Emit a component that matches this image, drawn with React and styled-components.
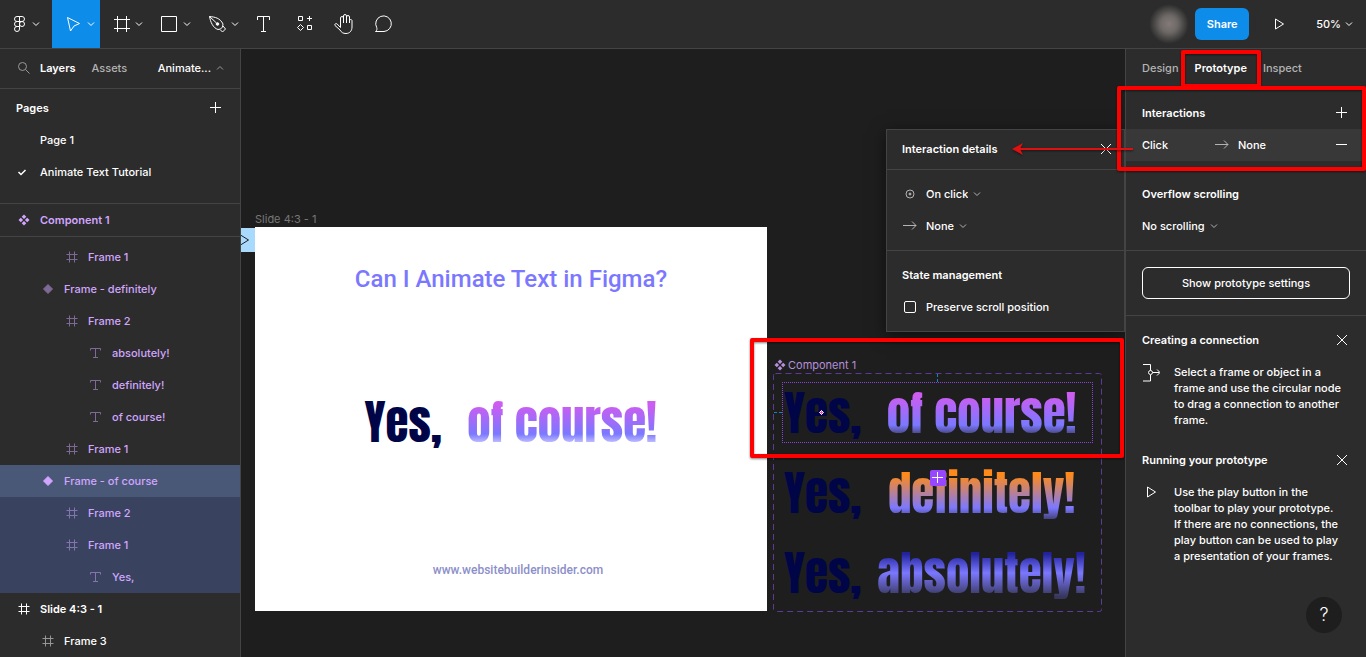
import React from "react";
import styled, { createGlobalStyle, css } from "styled-components";

const GlobalStyle = createGlobalStyle`
  * {
    box-sizing: border-box;
  }

  body {
    margin: 0;
    background: #1e1e1e;
    color: #fff;
    font-family: Inter, "Liberation Sans", sans-serif;
    font-size: 11px;
    line-height: 16px;
    font-weight: 500;
  }

  button,
  select,
  input {
    margin: 0;
    padding: 0;
    border: 0;
    background: none;
    color: inherit;
    font: inherit;
  }

  h2,
  p,
  ul {
    margin: 0;
    padding: 0;
    font: inherit;
    list-style: none;
  }
`;

/* ---------- icons ---------- */

const Svg = styled.svg`
  display: block;
  flex: none;
  fill: none;
  stroke: currentColor;
  stroke-width: 1;
`;

const Icon = ({ size = 16, width, children, ...rest }) => (
  <Svg
    width={width || size}
    height={size}
    viewBox={`0 0 ${width || size} ${size}`}
    aria-hidden="true"
    {...rest}
  >
    {children}
  </Svg>
);

const ChevronIcon = ({ up }) => (
  <Icon size={10}>
    <path d={up ? "M2 6.5L5 3.5L8 6.5" : "M2 3.5L5 6.5L8 3.5"} />
  </Icon>
);

const FigmaIcon = () => (
  <Icon size={24}>
    <path d="M12.5 4.5H10a2.5 2.5 0 0 0 0 5h2.5zM12.5 4.5H15a2.5 2.5 0 0 1 0 5h-2.5zM12.5 9.5H10a2.5 2.5 0 0 0 0 5h2.5zM12.5 14.5H10a2.5 2.5 0 1 0 2.5 2.5zM15 9.5a2.5 2.5 0 1 1 0 5a2.5 2.5 0 0 1 0-5z" />
  </Icon>
);

const MoveIcon = () => (
  <Icon size={24}>
    <path d="M5.5 5.5L17.5 11.5L12 14L8.500 19z" strokeLinejoin="round" />
  </Icon>
);

const FrameIcon = () => (
  <Icon size={24}>
    <path d="M7.5 4v16M16.5 4v16M4 7.5h16M4 16.5h16" />
  </Icon>
);

const RectIcon = () => (
  <Icon size={24}>
    <path d="M3.5 4.5h15v15h-15z" />
  </Icon>
);

const PenIcon = () => (
  <Icon size={24}>
    <path
      d="M3.500 4.500C9 5 14 6 17 12L16.500 15L14.500 17L12 17.500C7 16 4.500 10 3.500 4.500L10.500 11"
      strokeLinejoin="round"
    />
    <path d="M17 14l2.500 3l-3 3l-2.500-2.500" strokeLinejoin="round" />
    <circle cx="11.500" cy="12" r="1.300" fill="currentColor" />
  </Icon>
);

const TextToolIcon = () => (
  <Icon size={24}>
    <path d="M5.5 8V4.5h12V8M11.5 4.5v15M9 19.5h5" />
  </Icon>
);

const ResourcesIcon = () => (
  <Icon size={24}>
    <path d="M6.5 4.500h4v4h-4zM15.5 13.500h4v4h-4zM17.5 4v5M15 6.500h5M8.5 12.500l3 3l-3 3l-3-3z" />
  </Icon>
);

const HandIcon = () => (
  <Icon size={24}>
    <path
      d="M11.500 11V6a1.500 1.500 0 0 0-3 0V15.500L5.200 12C4 11 2.200 12 3 13.500L8 18c1.500 2.500 3 3.500 6 3.500c3.500 0 6-2.500 6-6.500V8.500a1.300 1.300 0 0 0-2.500 0V11M11.500 6V4a1.500 1.500 0 0 1 3 0V11M14.500 5a1.500 1.500 0 0 1 3 0V9"
      strokeLinejoin="round"
    />
  </Icon>
);

const CommentIcon = () => (
  <Icon size={24}>
    <path
      d="M3.500 19.500C5 18.400 5.200 17 4.700 15.500A7.800 7.800 0 1 1 12 19.500z"
      strokeLinejoin="round"
    />
  </Icon>
);

const PlayIcon = () => (
  <Icon size={16}>
    <path d="M4.500 3L12.500 8L4.500 13z" strokeLinejoin="round" />
  </Icon>
);

const SearchIcon = () => (
  <Icon size={16}>
    <circle cx="6.500" cy="6.500" r="4" />
    <path d="M9.500 9.500L13.500 13.500" />
  </Icon>
);

const PlusIcon = () => (
  <Icon size={16}>
    <path d="M7.500 2v11M2 7.500h11" />
  </Icon>
);

const MinusIcon = () => (
  <Icon size={16}>
    <path d="M2 7.500h11" />
  </Icon>
);

const CloseIcon = () => (
  <Icon size={16}>
    <path d="M3 3L13 13M13 3L3 13" />
  </Icon>
);

const CheckIcon = () => (
  <Icon size={12}>
    <path d="M2.500 6L5 8.500L9.500 4" strokeWidth="1.500" />
  </Icon>
);

const ArrowIcon = () => (
  <Icon size={16}>
    <path d="M1 7.500h13M10 3.500L14 7.500L10 11.500" />
  </Icon>
);

const ClickIcon = () => (
  <Icon size={16}>
    <circle cx="8" cy="8" r="4" />
    <circle cx="8" cy="8" r="1" fill="currentColor" />
  </Icon>
);

const ConnectionIcon = () => (
  <Icon size={18}>
    <path d="M1 .500h7.500v6M8.500 11v6H1M10.500 8.500h7M15 5.500l3 3l-3 3" />
    <circle cx="8.500" cy="8.500" r="2" />
  </Icon>
);

const layerIcons = {
  frame: <path d="M5.500 2.500v11M10.500 2.500v11M2.500 5.500h11M2.500 10.500h11" />,
  text: <path d="M2.500 5.500v-2h10v2M7.500 3.500v9M5 12.500h5" />,
  variant: <path d="M8 3.500L12.500 8L8 12.500L3.500 8z" fill="currentColor" />,
  component: (
    <path
      d="M8 2.500L10.300 4.800L8 7.100L5.700 4.800zM8 8.900L10.300 11.200L8 13.500L5.700 11.200zM4.800 5.700L7.100 8L4.800 10.300L2.500 8zM11.200 5.700L13.500 8L11.200 10.300L8.900 8z"
      fill="currentColor"
      stroke="none"
    />
  ),
};

/* ---------- toolbar ---------- */

const Page = styled.div`
  position: relative;
  display: flex;
  flex-direction: column;
  height: 100vh;
  overflow: hidden;
`;

const Toolbar = styled.header`
  display: flex;
  justify-content: space-between;
  flex: none;
  height: 49px;
  background: #2c2c2c;
  border-bottom: 1px solid #444;
`;

const ToolGroup = styled.div`
  display: flex;
  align-items: center;
`;

const Tool = styled.button`
  display: flex;
  align-items: center;
  justify-content: center;
  width: ${({ $menu }) => ($menu ? 48 : 40)}px;
  height: 48px;
  padding-left: ${({ $menu }) => ($menu ? 6 : 0)}px;
  background: ${({ $active }) => ($active ? "#0d8ce9" : "transparent")};
`;

const MainMenu = styled(Tool)`
  width: 52px;
  padding-right: 4px;
`;

const Avatar = styled.div`
  width: 40px;
  height: 40px;
  margin-right: 6px;
  border-radius: 50%;
  background: radial-gradient(circle, #857a78 0%, #6d6967 30%, #2c2c2c 70%);
`;

const ShareButton = styled.button`
  width: 54px;
  height: 32px;
  border-radius: 6px;
  background: #0d8ce9;
  font-weight: 600;
`;

const PresentButton = styled(Tool)`
  width: 60px;
`;

const Zoom = styled.div`
  display: flex;
  align-items: center;
  gap: 3px;
  padding: 0 12px 0 7px;
`;

const Select = styled.select`
  appearance: none;
  field-sizing: content;
  height: 16px;
  outline: none;
`;

/* ---------- panels ---------- */

const Workspace = styled.main`
  display: flex;
  flex: 1;
  min-height: 0;
`;

const Panel = styled.aside`
  flex: none;
  width: 241px;
  overflow: hidden;
  background: #2c2c2c;
  border: 0 solid #444;
  border-width: ${({ $side }) => ($side === "left" ? "0 1px 0 0" : "0 0 0 1px")};
`;

const Tabs = styled.div`
  display: flex;
  align-items: center;
  gap: 16px;
  height: 40px;
  padding: 0 15px 2px 16px;
  border-bottom: 1px solid #444;
`;

const Tab = styled.button`
  color: ${({ $active }) => ($active ? "#fff" : "#b3b3b3")};
  font-weight: ${({ $active }) => ($active ? 600 : 500)};
`;

const PageSwitch = styled.button`
  display: flex;
  align-items: center;
  gap: 4px;
  margin-left: auto;

  svg {
    color: #999;
  }
`;

const SearchButton = styled.button`
  margin-right: -8px;
  color: #999;
`;

const Section = styled.section`
  padding: 8px 0;
  border-bottom: ${({ $last }) => ($last ? "0" : "1px solid #444")};
`;

const PagesSection = styled(Section)`
  padding: 3px 0 15px;
`;

const Row = styled.div`
  display: flex;
  align-items: center;
  gap: 8px;
  height: 32px;
  padding: 0 16px;
  background: ${({ $filled }) => ($filled ? "#383838" : "transparent")};

  svg {
    color: ${({ $dim }) => ($dim ? "#b3b3b3" : "inherit")};
  }

  button svg {
    color: #fff;
  }
`;

const Heading = styled.h2`
  flex: 1;
  font-weight: 600;
`;

const PageItem = styled.li`
  display: flex;
  align-items: center;
  gap: 12px;
  height: 32px;
  padding-left: ${({ $current }) => ($current ? 16 : 40)}px;
`;

const layerColors = {
  selected: "#4a5878",
  child: "#394360",
};

const Layer = styled.li`
  display: flex;
  align-items: center;
  gap: 8px;
  height: 32px;
  padding-left: ${({ $depth }) => 16 + $depth * 24}px;
  color: ${({ $plain }) => ($plain ? "#fff" : "#d2a6ff")};
  background: ${({ $state }) => layerColors[$state] || "transparent"};
  font-weight: ${({ $depth }) => ($depth === 0 ? 600 : 500)};

  svg {
    opacity: ${({ $depth, $state }) =>
      $depth === 0 || $state === "selected" ? 1 : 0.5};
  }
`;

const RootLayer = styled.ul`
  border: solid #444;
  border-width: 0 0 1px;
`;

const LayerTree = styled.ul`
  padding-top: 4px;
`;

const ClickName = styled.span`
  width: 64px;
`;

const Target = styled.span`
  flex: 1;
`;

const SettingsButton = styled.button`
  display: block;
  width: calc(100% - 32px);
  height: 32px;
  margin: 8px 16px;
  border: 1px solid #fff;
  border-radius: 6px;
`;

const Tip = styled.div`
  display: flex;
  gap: 14px;
  padding: 8px 24px 16px 16px;
`;

const TipIcon = styled.span`
  display: flex;
  flex: none;
  justify-content: center;
  width: 18px;
`;

const HelpButton = styled.button`
  position: absolute;
  right: 24px;
  bottom: 24px;
  width: 36px;
  height: 36px;
  border-radius: 50%;
  background: #1e1e1e;
  font-size: 18px;
  font-weight: 300;
`;

/* ---------- canvas ---------- */

const Canvas = styled.section`
  position: relative;
  flex: 1;
  min-width: 0;
  overflow: hidden;
  background: #1e1e1e;
`;

const CanvasLabel = styled.span`
  position: absolute;
  left: ${({ $x }) => $x}px;
  top: ${({ $y }) => $y}px;
  display: flex;
  align-items: center;
  color: ${({ $component }) => ($component ? "#b58fdc" : "#777")};
  font-weight: 400;
`;

const StartPoint = styled.div`
  position: absolute;
  left: 0;
  top: 179px;
  width: 14px;
  height: 24px;
  overflow: hidden;
  background: #a9dafb;
  color: #1e1e1e;

  svg {
    margin: 4px 0 0 -5px;
  }
`;

const Slide = styled.article`
  position: absolute;
  left: 14px;
  top: 178px;
  display: flex;
  flex-direction: column;
  align-items: center;
  width: 512px;
  height: 384px;
  padding: 36px 0 33px;
  background: #fff;
  color: #7b78ff;
  font-family: Roboto, sans-serif;
`;

const SlideTitle = styled.h2`
  font-size: 24px;
  line-height: 32px;
  font-weight: 500;
`;

const SlideLink = styled.a`
  margin: auto 0 0 14px;
  color: #8c8fc9;
  font-size: 12px;
  text-decoration: none;
`;

const SlidePhrase = styled.div`
  width: 311px;
  margin: 96px 0 0 14px;
`;

const Phrase = styled.p`
  display: grid;
  grid-template-columns: 86px 1fr;
  align-items: center;
  height: 61px;
  padding-left: 2px;
  color: #000547;
  font-family: Impact, Anton, Roboto, sans-serif;
  font-size: 47px;
  line-height: 60px;
  font-weight: 400;
  white-space: nowrap;
`;

const gradients = {
  course: "#cf5cf0 20%, #7b78ff 70%, #7b78ff44 90%",
  definitely: "#ff8a1a 20%, #7b78ff 75%, #7b78ff44 98%",
  absolutely: "#22229c 18%, #7b78ff 50%, #7b78ff44 90%",
};

const Word = styled.span`
  justify-self: center;
  background: linear-gradient(${({ $tone }) => gradients[$tone]});
  background-clip: text;
  color: transparent;
`;

const ComponentSet = styled.div`
  position: absolute;
  left: 532px;
  top: 324px;
  display: flex;
  flex-direction: column;
  gap: 19px;
  width: 329px;
  height: 239px;
  padding: 9px;
`;

const SetOutline = styled.svg`
  position: absolute;
  inset: 0;
  width: 100%;
  height: 100%;
  fill: none;
  stroke: #5d3a96;
`;

const Selection = styled.div`
  position: absolute;
  left: 9px;
  top: 9px;
  width: 311px;
  height: 61px;
  border: 1px dotted #8644dc;
`;

const AddVariant = styled.button`
  position: absolute;
  left: 157px;
  top: 97px;
  width: 16px;
  height: 16px;
  border-radius: 2px;
  background: #9747ff;
`;

/* ---------- interaction dialog ---------- */

const Dialog = styled.section`
  position: absolute;
  right: 0;
  top: 80px;
  width: 239px;
  background: #2c2c2c;
  border: 1px solid #444;
  box-shadow: 0 4px 16px rgba(0, 0, 0, 0.5);
`;

const DialogHeader = styled(Row)`
  height: 40px;
  padding: 0 10px 2px 15px;
  border-bottom: 1px solid #444;
`;

const DialogRow = styled(Row)`
  padding: 0 15px;
`;

const Field = styled.label`
  display: flex;
  align-items: center;
  gap: 4px;
`;

const Checkbox = styled.input`
  appearance: none;
  width: 12px;
  height: 12px;
  margin: 0 2px;
  border: 1px solid #fff;
  border-radius: 2px;
`;

/* ---------- red markup ---------- */

const markup = css`
  position: absolute;
  pointer-events: none;
  filter: drop-shadow(0 1px 1px rgba(0, 0, 0, 0.5));
`;

const Highlight = styled.div`
  ${markup}
  left: ${({ $left }) => ($left === undefined ? "auto" : `${$left}px`)};
  right: ${({ $right }) => ($right === undefined ? "auto" : `${$right}px`)};
  top: ${({ $top }) => $top}px;
  width: ${({ $width }) => $width}px;
  height: ${({ $height }) => $height}px;
  border: 4px solid #f00;
  border-radius: 2px;
`;

const MarkupArrow = styled.svg`
  ${markup}
  right: 233px;
  top: 142px;
`;

const layers = [
  { name: "Frame 1", icon: "frame", depth: 2 },
  { name: "Frame - definitely", icon: "variant", depth: 1 },
  { name: "Frame 2", icon: "frame", depth: 2 },
  { name: "absolutely!", icon: "text", depth: 3 },
  { name: "definitely!", icon: "text", depth: 3 },
  { name: "of course!", icon: "text", depth: 3 },
  { name: "Frame 1", icon: "frame", depth: 2 },
  { name: "Frame - of course", icon: "variant", depth: 1, state: "selected" },
  { name: "Frame 2", icon: "frame", depth: 2, state: "child" },
  { name: "Frame 1", icon: "frame", depth: 2, state: "child" },
  { name: "Yes,", icon: "text", depth: 3, state: "child" },
  { name: "Slide 4:3 - 1", icon: "frame", depth: 0, plain: true },
  { name: "Frame 3", icon: "frame", depth: 1, plain: true },
];

const LayerItem = ({ name, icon, depth, state, plain }) => (
  <Layer $depth={depth} $state={state} $plain={plain}>
    <Icon>{layerIcons[icon]}</Icon>
    {name}
  </Layer>
);

const Dropdown = ({ label, value }) => (
  <Field>
    <Select aria-label={label} defaultValue={value}>
      <option>{value}</option>
    </Select>
    <ChevronIcon />
  </Field>
);

const TopBar = () => (
  <Toolbar>
    <ToolGroup>
      <MainMenu aria-label="Main menu">
        <FigmaIcon />
        <ChevronIcon />
      </MainMenu>
      <Tool $menu $active aria-label="Move">
        <MoveIcon />
        <ChevronIcon />
      </Tool>
      <Tool $menu aria-label="Frame">
        <FrameIcon />
        <ChevronIcon />
      </Tool>
      <Tool $menu aria-label="Rectangle">
        <RectIcon />
        <ChevronIcon />
      </Tool>
      <Tool $menu aria-label="Pen">
        <PenIcon />
        <ChevronIcon />
      </Tool>
      <Tool aria-label="Text">
        <TextToolIcon />
      </Tool>
      <Tool aria-label="Resources">
        <ResourcesIcon />
      </Tool>
      <Tool aria-label="Hand">
        <HandIcon />
      </Tool>
      <Tool aria-label="Comment">
        <CommentIcon />
      </Tool>
    </ToolGroup>
    <ToolGroup>
      <Avatar />
      <ShareButton>Share</ShareButton>
      <PresentButton aria-label="Present">
        <PlayIcon />
      </PresentButton>
      <Zoom>
        <Select aria-label="Zoom" defaultValue="50%">
          <option>50%</option>
        </Select>
        <ChevronIcon />
      </Zoom>
    </ToolGroup>
  </Toolbar>
);

const LayersPanel = () => (
  <Panel $side="left">
    <Tabs>
      <SearchButton aria-label="Search">
        <SearchIcon />
      </SearchButton>
      <Tab $active>Layers</Tab>
      <Tab>Assets</Tab>
      <PageSwitch>
        Animate... <ChevronIcon up />
      </PageSwitch>
    </Tabs>
    <PagesSection>
      <Row>
        <Heading>Pages</Heading>
        <button aria-label="Add page">
          <PlusIcon />
        </button>
      </Row>
      <ul>
        <PageItem>Page 1</PageItem>
        <PageItem $current>
          <CheckIcon /> Animate Text Tutorial
        </PageItem>
      </ul>
    </PagesSection>
    <RootLayer>
      <LayerItem name="Component 1" icon="component" depth={0} />
    </RootLayer>
    <LayerTree>
      {layers.map((layer, i) => (
        <LayerItem key={i} {...layer} />
      ))}
    </LayerTree>
  </Panel>
);

const InteractionDialog = () => (
  <Dialog>
    <DialogHeader>
      <Heading>Interaction details</Heading>
      <button aria-label="Close">
        <CloseIcon />
      </button>
    </DialogHeader>
    <Section>
      <DialogRow $dim>
        <ClickIcon />
        <Dropdown label="Trigger" value="On click" />
      </DialogRow>
      <DialogRow $dim>
        <ArrowIcon />
        <Dropdown label="Action" value="None" />
      </DialogRow>
    </Section>
    <Section $last>
      <DialogRow>
        <Heading>State management</Heading>
      </DialogRow>
      <DialogRow as="label">
        <Checkbox type="checkbox" />
        Preserve scroll position
      </DialogRow>
    </Section>
  </Dialog>
);

const DesignCanvas = () => (
  <Canvas>
    <CanvasLabel $x={14} $y={162}>
      Slide 4:3 - 1
    </CanvasLabel>
    <StartPoint>
      <PlayIcon />
    </StartPoint>
    <Slide>
      <SlideTitle>Can I Animate Text in Figma?</SlideTitle>
      <SlidePhrase>
        <Phrase>
          Yes, <Word $tone="course">of course!</Word>
        </Phrase>
      </SlidePhrase>
      <SlideLink href="#site">www.websitebuilderinsider.com</SlideLink>
    </Slide>
    <CanvasLabel $component $x={531} $y={308}>
      <Icon>{layerIcons.component}</Icon>
      Component 1
    </CanvasLabel>
    <ComponentSet>
      <SetOutline viewBox="0 0 329 239">
        <rect x=".5" y=".5" width="328" height="238" rx="2" strokeDasharray="6 4" />
        <path d="M164.500 1v8M1 39.500h8" stroke="#1c7fc4" strokeDasharray="3 2" />
      </SetOutline>
      <Phrase>
        Yes, <Word $tone="course">of course!</Word>
      </Phrase>
      <Phrase>
        Yes, <Word $tone="definitely">definitely!</Word>
      </Phrase>
      <Phrase>
        Yes, <Word $tone="absolutely">absolutely!</Word>
      </Phrase>
      <Selection />
      <SetOutline viewBox="0 0 329 239">
        <path d="M48.500 37.500l2 2l-2 2l-2-2z" fill="#f24fc0" stroke="#fff" />
      </SetOutline>
      <AddVariant aria-label="Add variant">
        <PlusIcon />
      </AddVariant>
    </ComponentSet>
    <InteractionDialog />
    <Highlight $left={509} $top={289} $width={374} $height={120} />
  </Canvas>
);

const PrototypePanel = () => (
  <Panel $side="right">
    <Tabs>
      <Tab>Design</Tab>
      <Tab $active>Prototype</Tab>
      <Tab>Inspect</Tab>
    </Tabs>
    <Section>
      <Row>
        <Heading>Interactions</Heading>
        <button aria-label="Add interaction">
          <PlusIcon />
        </button>
      </Row>
      <Row $filled $dim>
        <ClickName>Click</ClickName>
        <ArrowIcon />
        <Target>None</Target>
        <button aria-label="Remove interaction">
          <MinusIcon />
        </button>
      </Row>
    </Section>
    <Section>
      <Row>
        <Heading>Overflow scrolling</Heading>
      </Row>
      <Row $dim>
        <Dropdown label="Overflow scrolling" value="No scrolling" />
      </Row>
    </Section>
    <Section>
      <SettingsButton>Show prototype settings</SettingsButton>
    </Section>
    <Section $last>
      <Row>
        <Heading>Creating a connection</Heading>
        <button aria-label="Close tip">
          <CloseIcon />
        </button>
      </Row>
      <Tip>
        <TipIcon>
          <ConnectionIcon />
        </TipIcon>
        <p>
          Select a frame or object in a frame and use the circular node to drag
          a connection to another frame.
        </p>
      </Tip>
      <Row>
        <Heading>Running your prototype</Heading>
        <button aria-label="Close tip">
          <CloseIcon />
        </button>
      </Row>
      <Tip>
        <TipIcon>
          <PlayIcon />
        </TipIcon>
        <p>
          Use the play button in the toolbar to play your prototype. If there
          are no connections, the play button can be used to play a presentation
          of your frames.
        </p>
      </Tip>
    </Section>
  </Panel>
);

export default function App() {
  return (
    <Page>
      <GlobalStyle />
      <TopBar />
      <Workspace>
        <LayersPanel />
        <DesignCanvas />
        <PrototypePanel />
      </Workspace>
      <HelpButton aria-label="Help">?</HelpButton>
      <Highlight $right={105} $top={50} $width={80} $height={38} />
      <Highlight $right={0} $top={86} $width={249} $height={85} />
      <MarkupArrow width="121" height="14" viewBox="0 0 121 14">
        <path d="M4 7H121" stroke="#e01010" strokeWidth="2" />
        <path d="M0 7L11 1L8 7L11 13z" fill="#e01010" />
      </MarkupArrow>
    </Page>
  );
}
